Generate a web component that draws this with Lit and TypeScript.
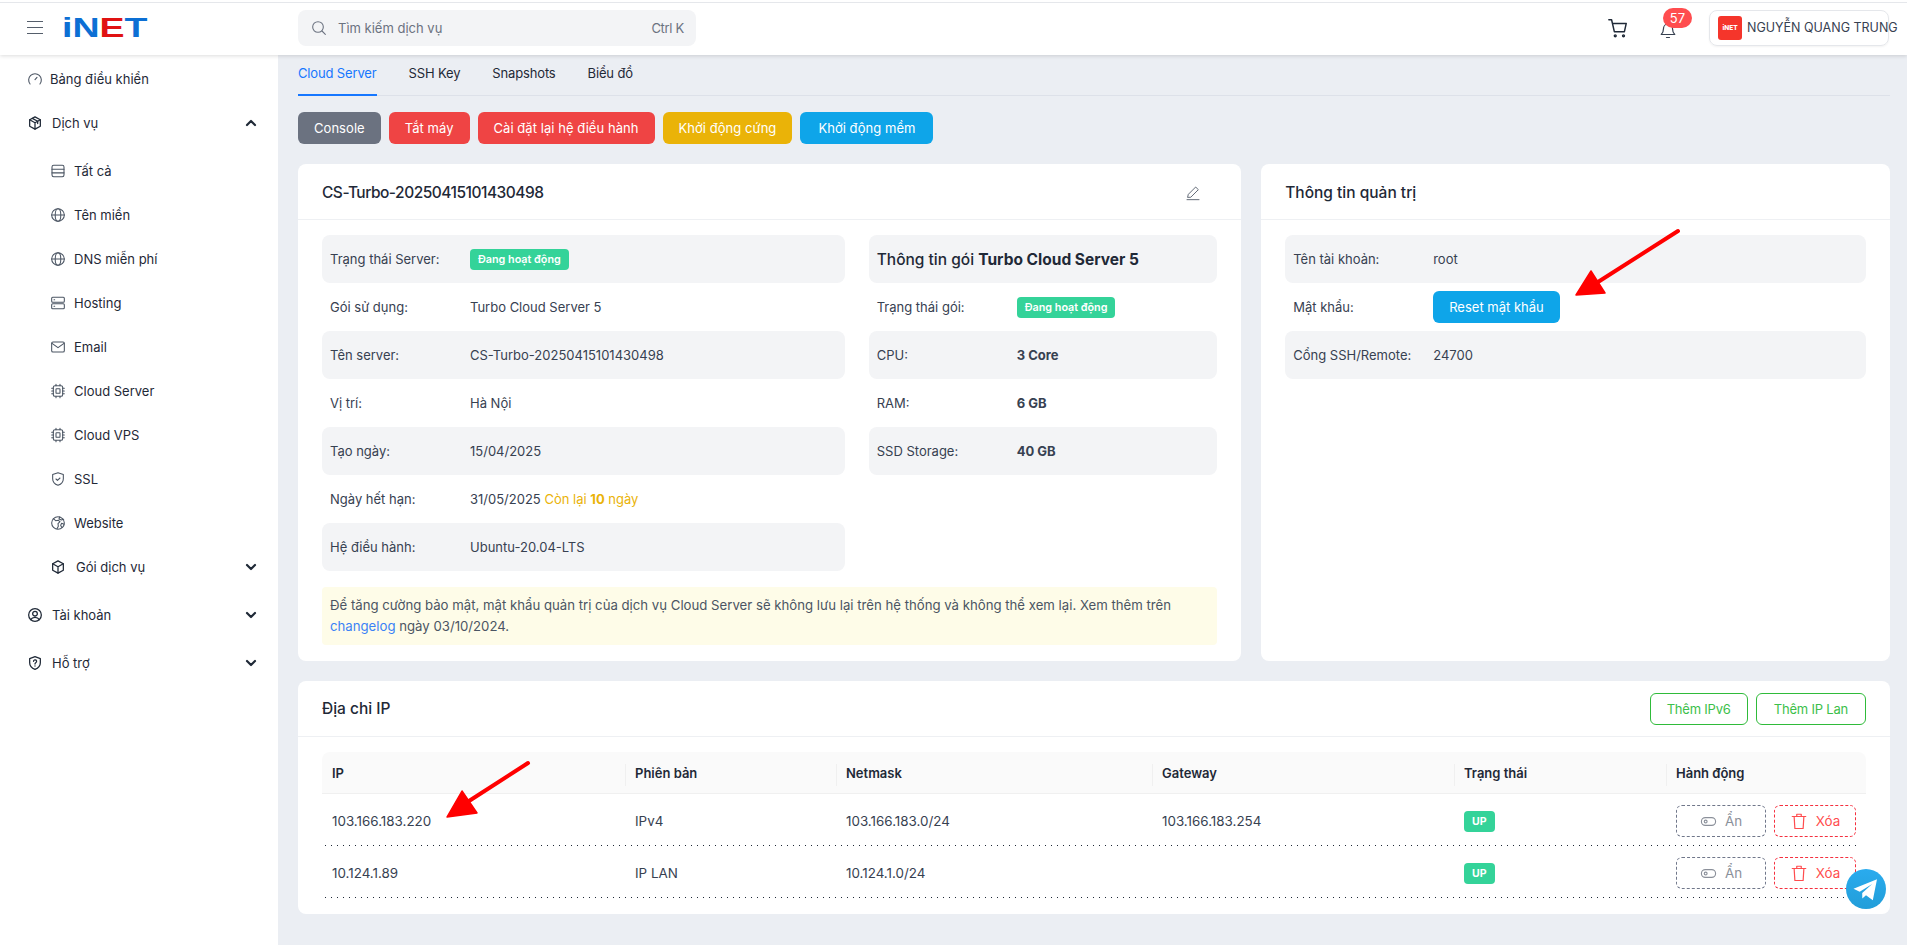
import { LitElement, html, css, svg } from 'lit';
import { customElement } from 'lit/decorators.js';

const paths: Record<string, any> = {
  gauge: svg`<path d="M4.6 19.5A9.5 9.5 0 1 1 19.4 19.5"/><path d="M12 13l3-3.5"/>`,
  box: svg`<path d="M12 2.8l8 4.4v9.6l-8 4.4-8-4.4V7.2z"/><path d="M4 7.2l8 4.4 8-4.4M12 11.6V21"/><path d="M8 5l8 4.4v3.4"/>`,
  cube: svg`<path d="M12 2.8l8 4.4v9.6l-8 4.4-8-4.4V7.2z"/><path d="M4 7.2l8 4.4 8-4.4M12 11.6V21"/>`,
  table: svg`<rect x="3" y="3.5" width="18" height="17" rx="2.5"/><path d="M3 9.3h18M3 14.8h18"/>`,
  globe: svg`<circle cx="12" cy="12" r="9.5"/><ellipse cx="12" cy="12" rx="4.2" ry="9.5"/><path d="M2.5 12h19"/>`,
  server: svg`<rect x="2.5" y="3.5" width="19" height="7.5" rx="1.5"/><rect x="2.5" y="13" width="19" height="7.5" rx="1.5"/><path d="M6 7.2h1M6 16.8h1"/>`,
  mail: svg`<rect x="2.5" y="4.5" width="19" height="15" rx="2"/><path d="M3 6.5l9 6.5 9-6.5"/>`,
  cpu: svg`<rect x="5" y="4" width="14" height="16" rx="2.5"/><rect x="9" y="8.5" width="6" height="7" rx="1"/><path d="M2.5 8h2.5M2.5 12h2.5M2.5 16h2.5M19 8h2.5M19 12h2.5M19 16h2.5M9 2v2M15 2v2M9 20v2M15 20v2"/>`,
  shield: svg`<path d="M12 2.5l8 2.8v6.2c0 5-3.4 8.2-8 10-4.600-1.800-8-5-8-10V5.300z"/><path d="M9 12l2.200 2.200L15 10.500"/>`,
  web: svg`<circle cx="12" cy="12" r="9.5"/><path d="M5 5.500l3.500 3 4-.5 2.500 2-3 3 .5 4-2 3.500M14.500 2.800L13.500 6l3.500 1.500 3.500-1M21 14l-3.500-1.500-1.500 3 1.500 3"/>`,
  user: svg`<circle cx="12" cy="12" r="9.5"/><circle cx="12" cy="10" r="3.5"/><path d="M5.500 19c1.500-2.500 3.800-3.500 6.500-3.500s5 1 6.500 3.500"/>`,
  help: svg`<path d="M12 2.5l8 2.800v6.200c0 5-3.400 8.200-8 10-4.600-1.800-8-5-8-10V5.300z"/><path d="M9.800 9.500a2.300 2.300 0 1 1 3.400 2c-.8.500-1.200 1-1.200 2M12 16.300v.2"/>`,
};

const icon = (name: string, size = 16) => html`<svg class="ico" width=${size} height=${size} viewBox="0 0 24 24">${paths[name]}</svg>`;

const chevron = (up = false) => html`<svg class="chev" width="12" height="12" viewBox="0 0 12 12"><path d=${up ? 'M2 8l4-4 4 4' : 'M2 4l4 4 4-4'}/></svg>`;

const subMenu = [
  ['table', 'Tất cả'],
  ['globe', 'Tên miền'],
  ['globe', 'DNS miễn phí'],
  ['server', 'Hosting'],
  ['mail', 'Email'],
  ['cpu', 'Cloud Server'],
  ['cpu', 'Cloud VPS'],
  ['shield', 'SSL'],
  ['web', 'Website'],
];

const ipRows = [
  { ip: '103.166.183.220', ver: 'IPv4', mask: '103.166.183.0/24', gw: '103.166.183.254' },
  { ip: '10.124.1.89', ver: 'IP LAN', mask: '10.124.1.0/24', gw: '' },
];

@customElement('app-root')
export class AppRoot extends LitElement {
  static styles = css`
    :host {
      display: block;
      position: relative;
      min-height: 100vh;
      height: 945px;
      overflow: hidden;
      background: #ebeef3;
      font-family: Inter, 'Noto Sans', sans-serif;
      font-size: 13px;
      color: #374151;
    }
    .ico {
      fill: none;
      stroke: currentColor;
      stroke-width: 1.6;
      stroke-linecap: round;
      stroke-linejoin: round;
      flex: none;
    }
    .chev {
      fill: none;
      stroke: #1f2937;
      stroke-width: 2.2;
      stroke-linecap: round;
      stroke-linejoin: round;
    }

    /* top bar */
    .top {
      position: relative;
      z-index: 2;
      height: 55px;
      box-sizing: border-box;
      background: #fff;
      box-shadow: 0 1px 4px rgba(0, 0, 0, 0.14);
      display: flex;
      align-items: center;
      padding-right: 18px;
    }
    .top::before {
      content: '';
      position: absolute;
      left: 0;
      right: 0;
      top: 2px;
      height: 1px;
      background: #e5e7eb;
    }
    .burger {
      margin-left: 27px;
      width: 16px;
      display: flex;
      flex-direction: column;
      gap: 4.5px;
    }
    .burger i {
      height: 1.5px;
      background: #555e6b;
    }
    .logo {
      margin-left: 19px;
      width: 236px;
      font-size: 28px;
      line-height: 28px;
      font-weight: 700;
      color: #0c6fd4;
      font-family: 'Liberation Sans', sans-serif;
      transform: scaleX(1.34);
      transform-origin: left center;
    }
    .logo b {
      color: #e01212;
    }
    .search {
      width: 398px;
      height: 36px;
      box-sizing: border-box;
      border-radius: 8px;
      background: #f3f4f6;
      display: flex;
      align-items: center;
      padding: 0 12px 0 13px;
      color: #6b7280;
    }
    .search .ico {
      margin-right: 11px;
    }
    .search kbd {
      margin-left: auto;
      font: inherit;
      letter-spacing: -0.3px;
    }
    .top-right {
      margin-left: auto;
      display: flex;
      align-items: center;
    }
    .cart {
      color: #1f2937;
      display: flex;
    }
    .bell {
      position: relative;
      margin-left: 30px;
      margin-top: 4px;
      color: #374151;
      display: flex;
    }
    .count {
      position: absolute;
      left: 4px;
      top: -13px;
      width: 29px;
      height: 20px;
      border-radius: 10px;
      background: #ff4d4f;
      color: #fff;
      font-size: 13px;
      line-height: 20px;
      text-align: center;
    }
    .account {
      margin-left: 32px;
      width: 180px;
      height: 36px;
      box-sizing: border-box;
      border: 1px solid #e5e7eb;
      border-radius: 8px;
      box-shadow: 0 1px 2px rgba(0, 0, 0, 0.05);
      display: flex;
      align-items: center;
      gap: 5px;
      padding-left: 8px;
      white-space: nowrap;
      font-size: 12.5px;
    }
    .avatar {
      width: 24px;
      height: 24px;
      border-radius: 3px;
      background: #f5352b;
      color: #fff;
      font-size: 6.5px;
      font-weight: 800;
      line-height: 24px;
      text-align: center;
      flex: none;
    }

    .layout {
      display: flex;
    }

    /* sidebar */
    .side {
      width: 278px;
      height: 890px;
      flex: none;
      background: #fff;
      box-sizing: border-box;
      padding: 2px 21px 0 27px;
      color: #1f2937;
    }
    .item {
      height: 44px;
      display: flex;
      align-items: center;
      gap: 9px;
    }
    .item .chev {
      margin-left: auto;
    }
    .item.first {
      gap: 7px;
    }
    .item .ico {
      color: #1f2937;
      stroke-width: 1.9;
    }
    .gauge .ico {
      color: #4b5563;
      stroke-width: 1.6;
    }
    .sub {
      margin: 4px 0;
      padding-left: 23px;
    }
    .sub .item {
      gap: 8px;
    }
    .sub .item .ico {
      color: #4b5563;
      stroke-width: 1.6;
    }
    .sub .pack {
      gap: 10px;
    }
    .sub .pack .ico {
      color: #1f2937;
      stroke-width: 1.9;
    }
    .help-item {
      margin-top: 4px;
    }

    /* main */
    .main {
      flex: 1;
      min-width: 0;
      padding: 0 17px 0 20px;
    }
    .tabs {
      height: 41px;
      box-sizing: border-box;
      border-bottom: 1px solid #dde1e9;
      display: flex;
      gap: 32px;
      margin-bottom: 16px;
      letter-spacing: -0.15px;
    }
    .tab {
      height: 41px;
      box-sizing: border-box;
      padding-top: 10px;
      color: #1f2937;
    }
    .tab.on {
      color: #1677ff;
      border-bottom: 2px solid #1677ff;
    }
    .actions {
      display: flex;
      gap: 8px;
      margin-bottom: 20px;
    }
    .btn {
      height: 32px;
      line-height: 32px;
      padding: 0 16px;
      border-radius: 6px;
      color: #fff;
      white-space: nowrap;
    }
    .actions .btn {
      letter-spacing: 0.05px;
    }
    .btn.soft {
      padding: 0 18px;
    }
    .gray { background: #6b7280; }
    .red { background: #ef4444; }
    .yellow { background: #eab308; }
    .sky { background: #0ea5e9; }

    .cols {
      display: grid;
      grid-template-columns: 3fr 2fr;
      gap: 20px;
      margin-bottom: 20px;
    }
    .card {
      background: #fff;
      border-radius: 8px;
    }
    .head {
      height: 56px;
      box-sizing: border-box;
      border-bottom: 1px solid #eef0f3;
      padding: 2px 24px 0;
      display: flex;
      align-items: center;
      justify-content: space-between;
      font-size: 15.5px;
      font-weight: 500;
      color: #1f2937;
    }
    .head .name {
      letter-spacing: -0.5px;
    }
    .head .ico {
      color: #4b5563;
      margin-right: 16px;
      stroke-width: 1.3;
    }
    .body {
      padding: 15px 24px 16px;
    }
    .info {
      display: grid;
      grid-template-columns: 3fr 2fr;
      gap: 24px;
    }
    .row {
      height: 48px;
      padding: 0 8px;
      border-radius: 8px;
      display: flex;
      align-items: center;
    }
    .rows .row:nth-child(odd) {
      background: #f3f4f6;
    }
    .row .label {
      width: 140px;
      flex: none;
    }
    .title {
      font-size: 15.5px;
      font-weight: 500;
      color: #1f2937;
    }
    .title b {
      font-weight: 700;
    }
    .status {
      height: 21px;
      line-height: 21px;
      padding: 0 8px;
      border-radius: 4px;
      background: #34d399;
      color: #fff;
      font-size: 10.8px;
      font-weight: 600;
    }
    .remain {
      color: #eab308;
    }
    .note {
      margin-top: 16px;
      padding: 8px;
      border-radius: 4px;
      background: #fefce8;
      color: #4b5563;
      font-size: 13.2px;
      line-height: 21px;
    }
    .note a {
      color: #3b82f6;
    }
    .outline {
      display: flex;
      gap: 8px;
    }
    .outline span {
      height: 32px;
      box-sizing: border-box;
      line-height: 30px;
      padding: 0 16px;
      border: 1px solid #2fbb3a;
      border-radius: 6px;
      color: #3cc04a;
      font-size: 13px;
      font-weight: 400;
      letter-spacing: -0.2px;
    }
    .outline span:last-child {
      padding: 0 17px;
    }
    .ip-head {
      padding-top: 0;
    }

    /* ip table */
    .tr {
      display: grid;
      grid-template-columns: 303px 211px 316px 302px 212px 200px;
      align-items: center;
    }
    .thead {
      height: 42px;
      box-sizing: border-box;
      background: #fafafa;
      border-bottom: 1px solid #f0f0f0;
      border-radius: 8px 8px 0 0;
      font-weight: 600;
      color: #1f2937;
    }
    .thead div {
      position: relative;
      padding-left: 10px;
    }
    .thead div + div::before {
      content: '';
      position: absolute;
      left: 0;
      top: -1px;
      height: 22px;
      width: 1px;
      background: #f0f0f0;
    }
    .tbody {
      height: 52px;
      box-sizing: border-box;
      padding-top: 2px;
      position: relative;
      font-size: 13.4px;
    }
    .tbody > div {
      padding-left: 10px;
    }
    .tbody::after {
      content: '';
      position: absolute;
      left: 3px;
      right: 6px;
      bottom: 0;
      height: 1px;
      background: repeating-linear-gradient(90deg, #1f2937 0 1px, transparent 1px 6px);
    }
    .up {
      display: inline-block;
      height: 21px;
      line-height: 21px;
      padding: 0 8px;
      border-radius: 4px;
      background: #34d399;
      color: #fff;
      font-size: 10.5px;
      font-weight: 700;
    }
    .ops {
      display: flex;
      gap: 8px;
    }
    .op {
      height: 32px;
      box-sizing: border-box;
      border-radius: 6px;
      display: flex;
      align-items: center;
      justify-content: center;
      gap: 8px;
      color: #8b909a;
      border: 1px dashed #70778a;
      width: 90px;
    }
    .op.del {
      width: 82px;
      color: #ff4d4f;
      border-color: #f5303f;
    }

    /* floating bits */
    .telegram {
      position: absolute;
      left: 1846px;
      top: 869px;
      width: 40px;
      height: 40px;
      border-radius: 50%;
      background: linear-gradient(180deg, #2aabee, #229ed9);
    }
    .telegram svg {
      display: block;
    }
    .arrow {
      position: absolute;
      left: 0;
      top: 0;
      pointer-events: none;
    }
  `;

  render() {
    return html`
      <div class="top">
        <div class="burger"><i></i><i></i><i></i></div>
        <div class="logo">iN<b>E</b>T</div>
        <div class="search">
          <svg class="ico" width="16" height="16" viewBox="0 0 24 24"><circle cx="10.5" cy="10.5" r="8"/><path d="M16.5 16.5l5 5"/></svg>
          <span>Tìm kiếm dịch vụ</span>
          <kbd>Ctrl K</kbd>
        </div>
        <div class="top-right">
          <span class="cart">
            <svg class="ico" width="22" height="22" viewBox="0 0 24 24"><path d="M2 3h3l3 13h11l2-9H6"/><circle cx="9" cy="20.5" r="1"/><circle cx="18" cy="20.5" r="1"/></svg>
          </span>
          <span class="bell">
            <svg class="ico" width="18" height="18" viewBox="0 0 24 24"><path d="M6 10a6 6 0 0 1 12 0c0 5 2 7 3 8H3c1-1 3-3 3-8z"/><path d="M10 22h4"/></svg>
            <span class="count">57</span>
          </span>
          <div class="account"><span class="avatar">iNET</span>NGUYỄN QUANG TRUNG</div>
        </div>
      </div>

      <div class="layout">
        <nav class="side">
          <div class="item first gauge">${icon('gauge')}<span>Bảng điều khiển</span></div>
          <div class="item">${icon('box')}<span>Dịch vụ</span>${chevron(true)}</div>
          <div class="sub">
            ${subMenu.map(([ic, label]) => html`<div class="item">${icon(ic)}<span>${label}</span></div>`)}
            <div class="item pack">${icon('cube')}<span>Gói dịch vụ</span>${chevron()}</div>
          </div>
          <div class="item">${icon('user')}<span>Tài khoản</span>${chevron()}</div>
          <div class="item help-item">${icon('help')}<span>Hỗ trợ</span>${chevron()}</div>
        </nav>

        <main class="main">
          <div class="tabs">
            <span class="tab on">Cloud Server</span>
            <span class="tab">SSH Key</span>
            <span class="tab">Snapshots</span>
            <span class="tab">Biểu đồ</span>
          </div>

          <div class="actions">
            <span class="btn gray">Console</span>
            <span class="btn red">Tắt máy</span>
            <span class="btn red">Cài đặt lại hệ điều hành</span>
            <span class="btn yellow">Khởi động cứng</span>
            <span class="btn sky soft">Khởi động mềm</span>
          </div>

          <div class="cols">
            <section class="card">
              <div class="head">
                <span class="name">CS-Turbo-20250415101430498</span>
                <svg class="ico" width="16" height="16" viewBox="0 0 24 24"><path d="M4 18l1-4L16 3l4 4L9 18z"/><path d="M3 22h18"/></svg>
              </div>
              <div class="body">
                <div class="info">
                  <div class="rows">
                    <div class="row"><span class="label">Trạng thái Server:</span><span class="status">Đang hoạt động</span></div>
                    <div class="row"><span class="label">Gói sử dụng:</span><span>Turbo Cloud Server 5</span></div>
                    <div class="row"><span class="label">Tên server:</span><span>CS-Turbo-20250415101430498</span></div>
                    <div class="row"><span class="label">Vị trí:</span><span>Hà Nội</span></div>
                    <div class="row"><span class="label">Tạo ngày:</span><span>15/04/2025</span></div>
                    <div class="row"><span class="label">Ngày hết hạn:</span><span>31/05/2025 <span class="remain">Còn lại <b>10</b> ngày</span></span></div>
                    <div class="row"><span class="label">Hệ điều hành:</span><span>Ubuntu-20.04-LTS</span></div>
                  </div>
                  <div class="rows">
                    <div class="row title"><span>Thông tin gói <b>Turbo Cloud Server 5</b></span></div>
                    <div class="row"><span class="label">Trạng thái gói:</span><span class="status">Đang hoạt động</span></div>
                    <div class="row"><span class="label">CPU:</span><b>3 Core</b></div>
                    <div class="row"><span class="label">RAM:</span><b>6 GB</b></div>
                    <div class="row"><span class="label">SSD Storage:</span><b>40 GB</b></div>
                  </div>
                </div>
                <div class="note">Để tăng cường bảo mật, mật khẩu quản trị của dịch vụ Cloud Server sẽ không lưu lại trên hệ thống và không thể xem lại. Xem thêm trên <a>changelog</a> ngày 03/10/2024.</div>
              </div>
            </section>

            <section class="card">
              <div class="head"><span>Thông tin quản trị</span></div>
              <div class="body rows">
                <div class="row"><span class="label">Tên tài khoản:</span><span>root</span></div>
                <div class="row"><span class="label">Mật khẩu:</span><span class="btn sky">Reset mật khẩu</span></div>
                <div class="row"><span class="label">Cổng SSH/Remote:</span><span>24700</span></div>
              </div>
            </section>
          </div>

          <section class="card">
            <div class="head ip-head">
              <span>Địa chỉ IP</span>
              <div class="outline"><span>Thêm IPv6</span><span>Thêm IP Lan</span></div>
            </div>
            <div class="body">
              <div class="tr thead">
                <div>IP</div><div>Phiên bản</div><div>Netmask</div><div>Gateway</div><div>Trạng thái</div><div>Hành động</div>
              </div>
              ${ipRows.map(
                (r) => html`
                  <div class="tr tbody">
                    <div>${r.ip}</div>
                    <div>${r.ver}</div>
                    <div>${r.mask}</div>
                    <div>${r.gw}</div>
                    <div><span class="up">UP</span></div>
                    <div class="ops">
                      <span class="op">
                        <svg class="ico" width="17" height="17" viewBox="0 0 24 24"><rect x="2" y="6.5" width="20" height="11" rx="5.5"/><circle cx="8" cy="12" r="2"/></svg>
                        Ẩn
                      </span>
                      <span class="op del">
                        <svg class="ico" width="18" height="18" viewBox="0 0 24 24"><path d="M3 6h18M9 6V3h6v3M5.5 6l1 16h11l1-16"/></svg>
                        Xóa
                      </span>
                    </div>
                  </div>
                `
              )}
            </div>
          </section>
        </main>
      </div>

      <div class="telegram">
        <svg width="40" height="40" viewBox="0 0 40 40"><path d="M7.5 19.8L31 10.3l-4.2 20.9-6.8-5-3.7 3.2-.1-5.5 10-8.9-12.5 7.7z" fill="#fff"/></svg>
      </div>

      <svg class="arrow" width="1907" height="945">
        <g fill="#f00" stroke="#f00" stroke-linecap="round" stroke-linejoin="round">
          <path d="M1678 231L1598 282" stroke-width="4"/>
          <path d="M1576 295L1591 271L1605 293z" stroke-width="1.5"/>
          <path d="M528 763L469 801" stroke-width="4"/>
          <path d="M447 817L462 791L477 813z" stroke-width="1.5"/>
        </g>
      </svg>
    `;
  }
}
